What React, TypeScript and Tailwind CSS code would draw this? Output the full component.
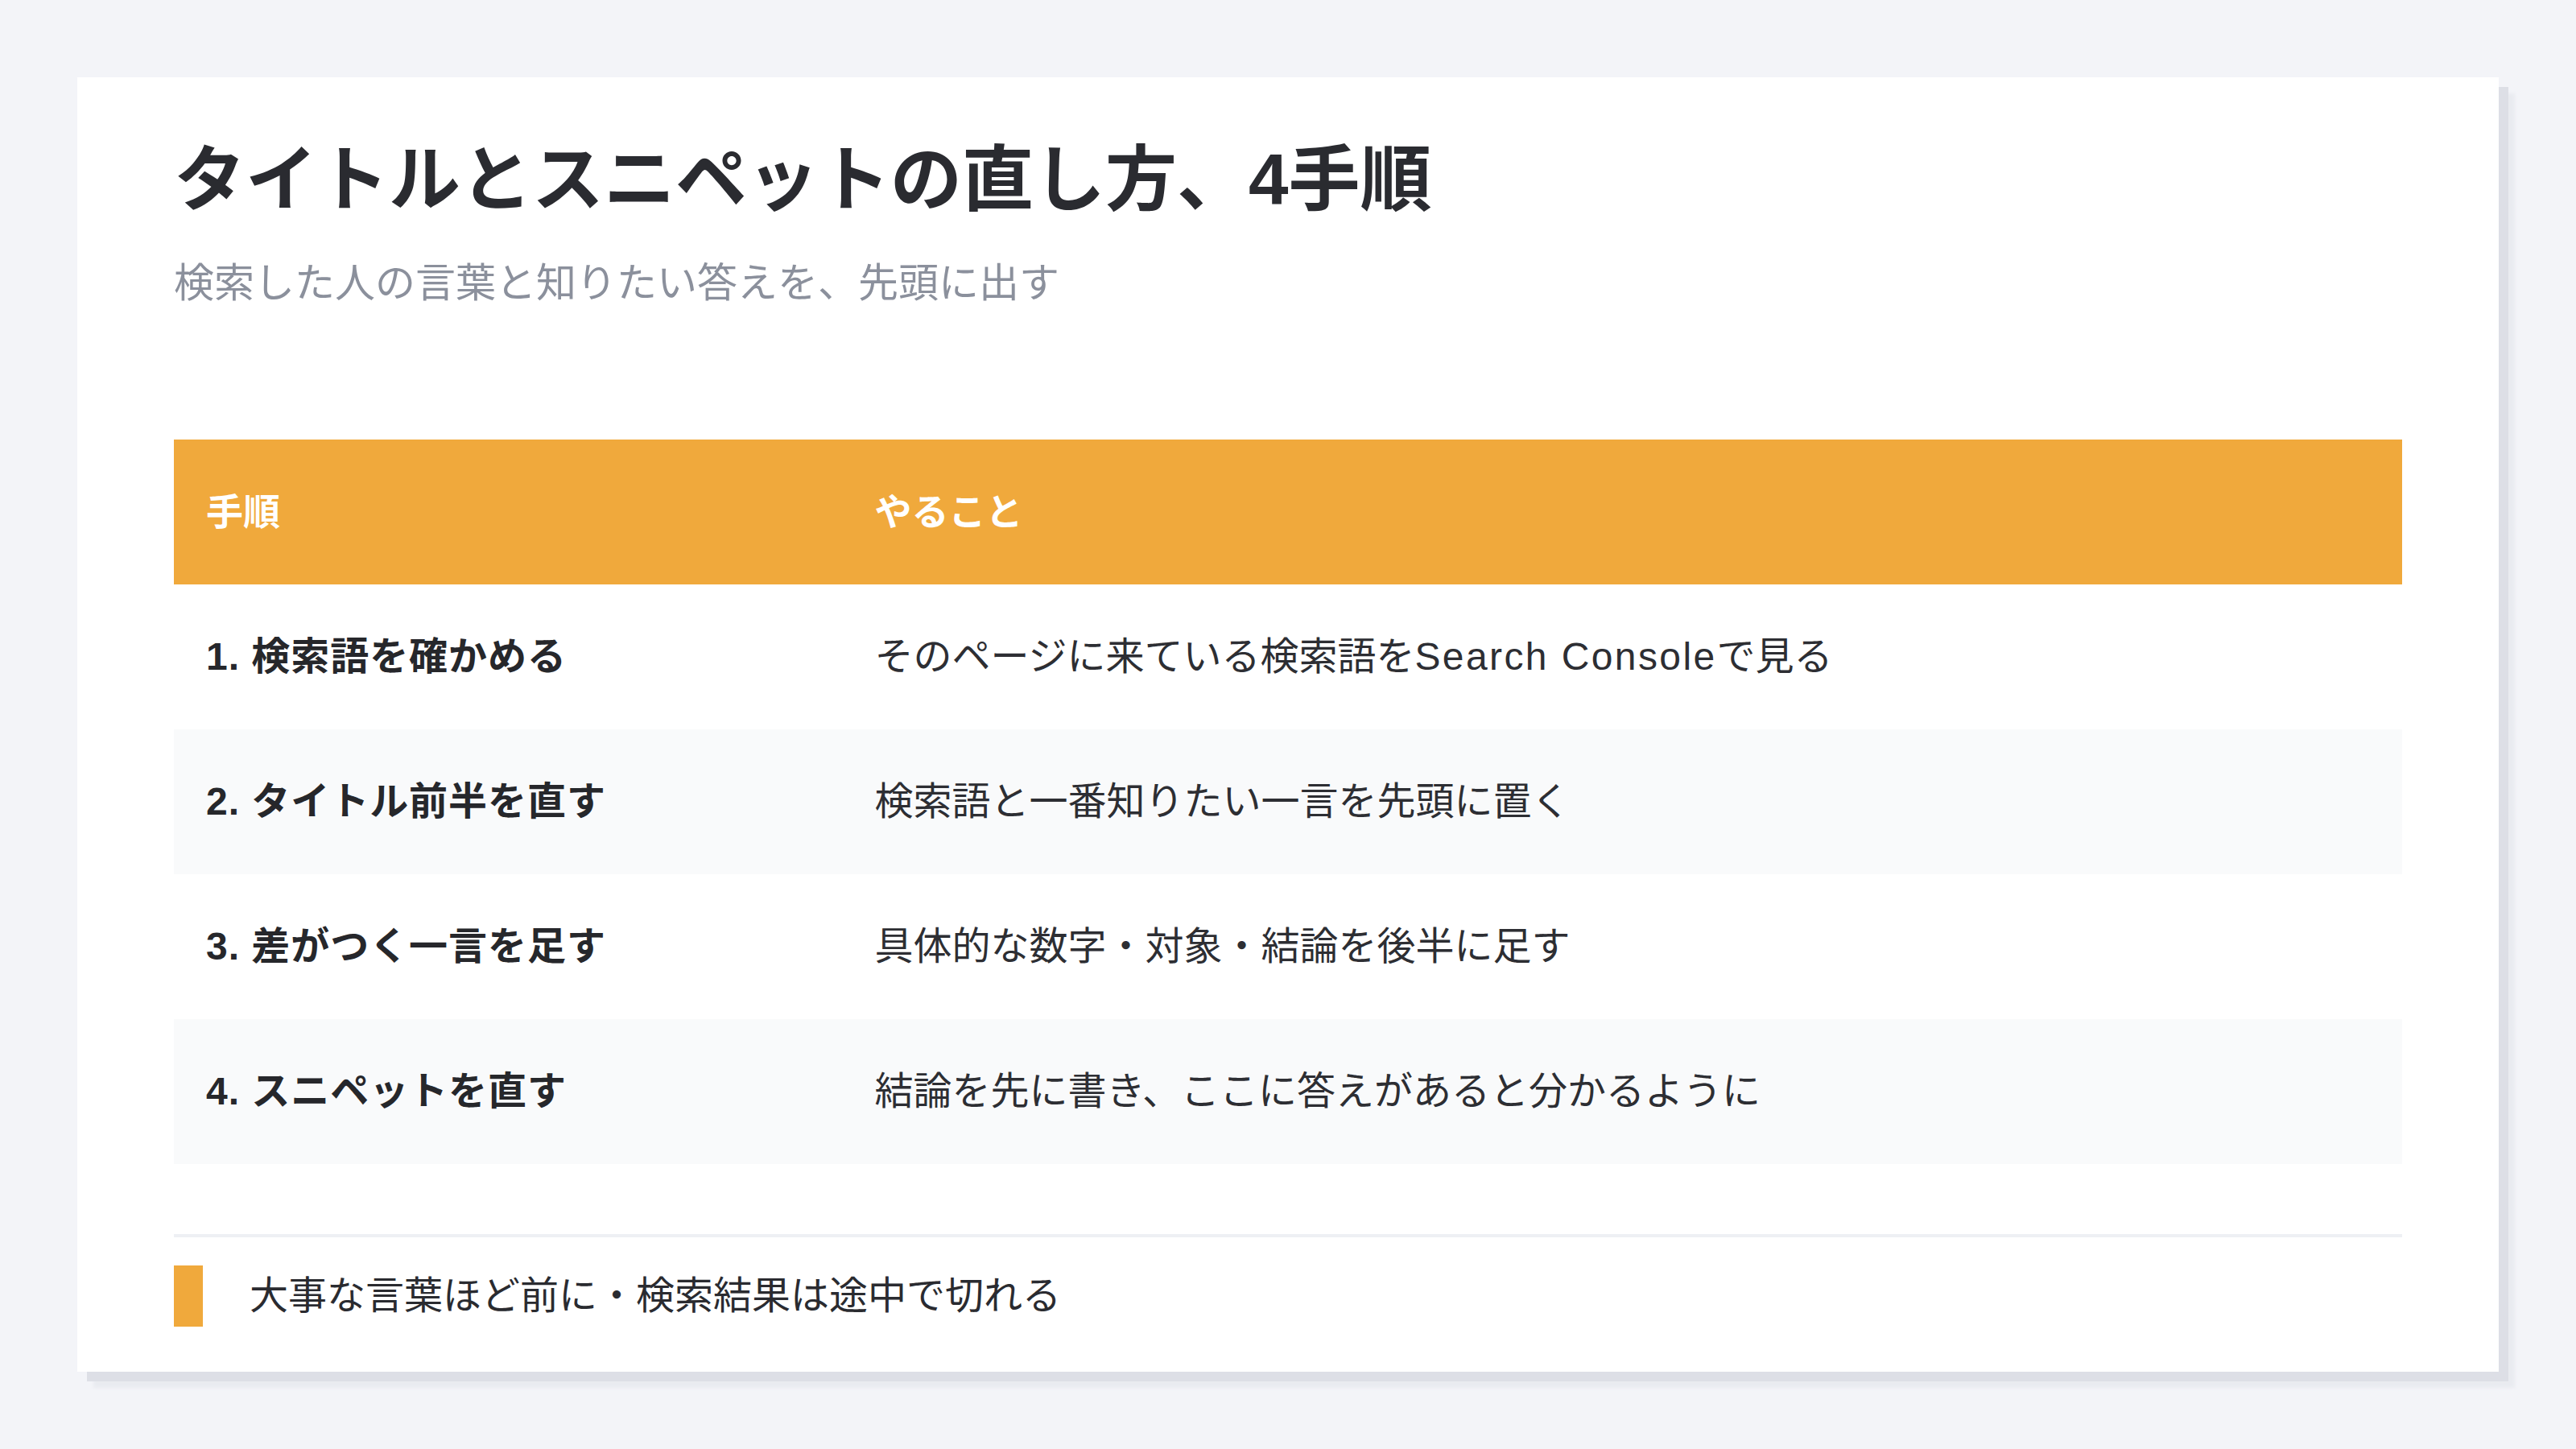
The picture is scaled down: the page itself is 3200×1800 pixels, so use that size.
const steps = [
  { label: '1. 検索語を確かめる', action: <>そのページに来ている検索語を<span className="tracking-[0.05em]">Search Console</span>で見る</> },
  { label: '2. タイトル前半を直す', action: <>検索語と一番知りたい一言を先頭に置く</> },
  { label: '3. 差がつく一言を足す', action: <>具体的な数字・対象・結論を後半に足す</> },
  { label: '4. スニペットを直す', action: <>結論を先に書き、ここに答えがあると分かるように</> },
];

const font = { fontFamily: '"Liberation Sans", "Noto Sans CJK JP", sans-serif' };

export default function App() {
  return (
    <div className="min-h-screen bg-[#f3f4f8] p-[96px]" style={font}>
      <div className="bg-white px-[120px] pt-[72px] pb-[56px] shadow-[12px_12px_0_#dddfe6,20px_20px_4px_#e9ebf0]">
        {/* Heading */}
        <h1 className="text-[89px] leading-[110px] font-bold text-[#2a2b30]">
          タイトルとスニペットの直し方、4手順
        </h1>
        <p className="mt-[39px] text-[50px] leading-[70px] text-[#8b909c]">
          検索した人の言葉と知りたい答えを、先頭に出す
        </p>

        {/* Table */}
        <div className="mt-[159px]">
          <div className="grid grid-cols-[30%_70%] h-[180px] items-center bg-[#f0a93c] text-white text-[46px] font-bold">
            <div className="pl-[40px]">手順</div>
            <div className="pl-[40px]">やること</div>
          </div>
          {steps.map((s, i) => (
            <div
              key={s.label}
              className={`grid grid-cols-[30%_70%] h-[180px] items-center text-[48px] ${i % 2 === 1 ? 'bg-[#f9fafb]' : 'bg-white'}`}
            >
              <div className="pl-[40px] font-bold tracking-[0.02em] text-[#26272b]">{s.label}</div>
              <div className="pl-[40px] text-[#2d2e33]">{s.action}</div>
            </div>
          ))}
        </div>

        {/* Footer note */}
        <div className="mt-[87px] h-[4px] bg-[#eef0f4]" />
        <div className="mt-[35px] flex items-center gap-[58px]">
          <div className="w-[36px] h-[76px] bg-[#f0a93c]" />
          <p className="text-[48px] text-[#2a2b30]">大事な言葉ほど前に・検索結果は途中で切れる</p>
        </div>
      </div>
    </div>
  );
}
